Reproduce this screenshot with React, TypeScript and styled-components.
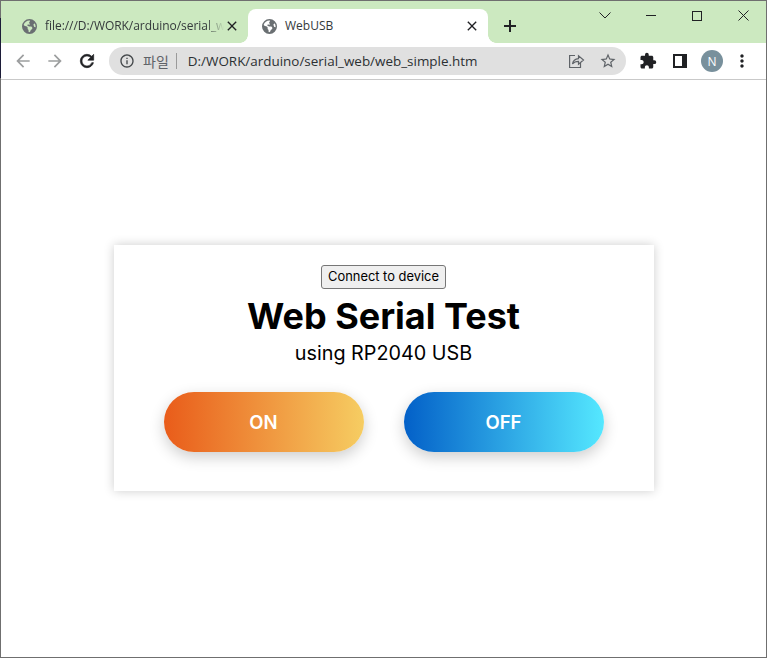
import React from 'react';
import styled, { createGlobalStyle } from 'styled-components';
import { FaEarthAmericas } from 'react-icons/fa6';
import {
  MdArrowBack,
  MdArrowForward,
  MdClose,
  MdExtension,
  MdInfoOutline,
  MdMoreVert,
  MdRefresh,
  MdStarBorder,
} from 'react-icons/md';

const GlobalStyle = createGlobalStyle`
  html, body {
    margin: 0;
    padding: 0;
    height: 100%;
    background: #fff;
  }
  #root {
    height: 100%;
  }
  * {
    box-sizing: border-box;
  }
`;

const Window = styled.div`
  position: relative;
  display: flex;
  flex-direction: column;
  width: 767px;
  height: 658px;
  border: 1px solid #6f6f6f;
  overflow: hidden;
  font-family: 'Open Sans', 'Noto Sans', sans-serif;
`;

/* bit of the dark desktop showing through at the window's left edge */
const EdgeShade = styled.div`
  position: fixed;
  left: 0;
  top: 18px;
  width: 1px;
  height: 60px;
  background: #1c1c38;
`;

const TitleBar = styled.header`
  display: flex;
  align-items: flex-end;
  flex: none;
  height: 42px;
  padding-left: 7px;
  background: #cce9c0;
`;

const Tab = styled.div<{ $active?: boolean }>`
  position: relative;
  display: flex;
  align-items: center;
  width: 240px;
  height: 34px;
  padding: 0 8px 0 14px;
  border-radius: 8px 8px 0 0;
  background: ${(p) => (p.$active ? '#fff' : 'transparent')};

  ${(p) =>
    p.$active &&
    `
    &::before, &::after {
      content: '';
      position: absolute;
      bottom: 0;
      width: 8px;
      height: 8px;
    }
    &::before {
      left: -8px;
      background: radial-gradient(circle at 0 0, transparent 7.5px, #fff 8px);
    }
    &::after {
      right: -8px;
      background: radial-gradient(circle at 100% 0, transparent 7.5px, #fff 8px);
    }
  `}
`;

const TabGlobe = styled(FaEarthAmericas)`
  flex: none;
  width: 15px;
  height: 15px;
  color: #6a6f72;
`;

const TabTitle = styled.span<{ $fade?: boolean }>`
  flex: 1;
  min-width: 0;
  margin-left: 8px;
  white-space: nowrap;
  font-size: 12px;
  line-height: 16px;
  color: #34393b;
  ${(p) =>
    p.$fade &&
    `
    letter-spacing: -0.05px;
    mask-image: linear-gradient(to right, #000 90%, transparent 100%);
  `}
`;

const TabClose = styled(MdClose)`
  flex: none;
  width: 16px;
  height: 16px;
  color: #202124;
`;

const NewTab = styled.svg`
  flex: none;
  width: 12px;
  height: 12px;
  margin: 0 0 11px 16px;
  color: #202124;
`;

const WindowControls = styled.div`
  display: flex;
  align-self: flex-start;
  margin-left: auto;
`;

const WindowControl = styled.div`
  display: flex;
  align-items: center;
  justify-content: center;
  width: 46px;
  height: 29px;
`;

const Toolbar = styled.nav`
  display: flex;
  align-items: center;
  flex: none;
  height: 37px;
  padding: 0 11px 0 12px;
  background: #fff;
  border-bottom: 1px solid #c9c9c9;
`;

const NavIcon = styled.span<{ $dim?: boolean; $gap?: number; $lead?: number; $heavy?: boolean }>`
  display: flex;
  align-items: center;
  justify-content: center;
  width: 20px;
  height: 20px;
  margin-left: ${(p) => p.$lead ?? 0}px;
  margin-right: ${(p) => p.$gap ?? 12}px;
  color: ${(p) => (p.$dim ? '#9c9e9f' : '#202124')};

  svg {
    width: 100%;
    height: 100%;
  }

  ${(p) => p.$heavy && `svg path:not([fill='none']) { stroke: currentColor; stroke-width: 0.8; }`}
`;

const PuzzleIcon = styled(MdExtension)`
  && {
    width: 18px;
    height: 18px;
  }
`;

const Omnibox = styled.div`
  display: flex;
  align-items: center;
  width: 517px;
  height: 28px;
  padding: 0 9px 0 10px;
  border-radius: 14px;
  background: #e0e0e0;
`;

const SiteInfo = styled(MdInfoOutline)`
  flex: none;
  width: 16px;
  height: 16px;
  color: #44484b;
`;

const Scheme = styled.span`
  margin-left: 8px;
  padding-right: 7px;
  border-right: 1px solid #9a9a9a;
  font-family: 'Noto Sans CJK KR', sans-serif;
  font-size: 14px;
  line-height: 16px;
  color: #5f6368;
`;

const Url = styled.span`
  flex: 1;
  margin-left: 11px;
  font-size: 13.45px;
  color: #2c3033;
  white-space: nowrap;
`;

const OmniAction = styled.span<{ $gap?: number }>`
  display: flex;
  width: 18px;
  height: 18px;
  margin-left: ${(p) => p.$gap ?? 0}px;
  color: #5f6368;

  svg {
    width: 100%;
    height: 100%;
  }
`;

const Avatar = styled.span`
  display: flex;
  align-items: center;
  justify-content: center;
  flex: none;
  width: 22px;
  height: 22px;
  margin-left: 1px;
  margin-right: 9px;
  border-radius: 50%;
  background: #78909c;
  font-size: 12px;
  color: #fff;
`;

const Page = styled.main`
  display: flex;
  flex: 1;
  align-items: center;
  justify-content: center;
  padding-bottom: 1px;
  background: #fff;
`;

const Card = styled.section`
  display: flex;
  flex-direction: column;
  align-items: center;
  width: 540px;
  height: 246px;
  padding-top: 20px;
  background: #fff;
  box-shadow: 0 0 10px rgba(0, 0, 0, 0.2);
  font-family: Inter, 'Open Sans', sans-serif;
  color: #000;
`;

const ConnectButton = styled.button`
  height: 24px;
  padding: 0 6px;
  border: 1px solid #767676;
  border-radius: 3px;
  background: #efefef;
  font-family: inherit;
  font-size: 12.9px;
  line-height: 20px;
  color: #000;
`;

const Title = styled.h1`
  margin: 5px 0 0;
  font-size: 36px;
  font-weight: 700;
  line-height: 44px;
`;

const Subtitle = styled.h2`
  margin: 0;
  font-size: 19.8px;
  font-weight: 400;
  line-height: 30px;
`;

const ButtonRow = styled.div`
  display: flex;
  gap: 40px;
  margin-top: 24px;
`;

const GradientButton = styled.button<{ $from: string; $to: string }>`
  width: 200px;
  height: 60px;
  border: none;
  border-radius: 30px;
  background: linear-gradient(to right, ${(p) => p.$from}, ${(p) => p.$to});
  box-shadow: 0 5px 15px rgba(0, 0, 0, 0.2);
  font-family: inherit;
  font-size: 18.5px;
  font-weight: 600;
  color: #fff;
`;

export default function App() {
  return (
    <>
      <GlobalStyle />
      <Window>
        <TitleBar>
          <Tab>
            <TabGlobe />
            <TabTitle $fade>file:///D:/WORK/arduino/serial_w</TabTitle>
            <TabClose />
          </Tab>
          <Tab $active>
            <TabGlobe />
            <TabTitle>WebUSB</TabTitle>
            <TabClose />
          </Tab>
          <NewTab viewBox="0 0 12 12" fill="currentColor">
            <path d="M5 0H7V5H12V7H7V12H5V7H0V5H5Z" />
          </NewTab>
          <WindowControls>
            <WindowControl>
              <svg width="12" height="7" viewBox="0 0 12 7" fill="none" stroke="#202124">
                <path d="M0.5 0.5 L6 6 L11.5 0.5" />
              </svg>
            </WindowControl>
            <WindowControl>
              <svg width="10" height="1" viewBox="0 0 10 1" fill="#202124">
                <rect width="10" height="1" />
              </svg>
            </WindowControl>
            <WindowControl>
              <svg width="10" height="10" viewBox="0 0 10 10" fill="none" stroke="#202124">
                <rect x="0.5" y="0.5" width="9" height="9" />
              </svg>
            </WindowControl>
            <WindowControl>
              <svg width="11" height="11" viewBox="0 0 11 11" fill="none" stroke="#202124">
                <path d="M0.5 0.5 L10.5 10.5 M10.5 0.5 L0.5 10.5" />
              </svg>
            </WindowControl>
          </WindowControls>
        </TitleBar>
        <Toolbar>
          <NavIcon $dim>
            <MdArrowBack />
          </NavIcon>
          <NavIcon $dim>
            <MdArrowForward />
          </NavIcon>
          <NavIcon $heavy>
            <MdRefresh />
          </NavIcon>
          <Omnibox>
            <SiteInfo />
            <Scheme>파일</Scheme>
            <Url>D:/WORK/arduino/serial_web/web_simple.htm</Url>
            <OmniAction>
              <svg viewBox="0 0 18 18" fill="none" stroke="currentColor" strokeWidth="1.2">
                <path d="M8 3.5H2.6V15.5H13.5V11" />
                <path d="M5.5 12C6 8.5 8.5 6.8 11.5 6.6V3.8L16.5 8L11.5 12.2V9.3C9 9.3 7 10 5.5 12Z" />
              </svg>
            </OmniAction>
            <OmniAction $gap={14}>
              <MdStarBorder />
            </OmniAction>
          </Omnibox>
          <NavIcon $lead={12}>
            <PuzzleIcon />
          </NavIcon>
          <NavIcon $gap={10}>
            <svg viewBox="0 0 20 20">
              <path
                fillRule="evenodd"
                fill="currentColor"
                d="M3 3H17V17H3ZM5 5V15H12V5Z"
              />
            </svg>
          </NavIcon>
          <Avatar>N</Avatar>
          <NavIcon $gap={0}>
            <MdMoreVert />
          </NavIcon>
        </Toolbar>
        <Page>
          <Card>
            <ConnectButton>Connect to device</ConnectButton>
            <Title>Web Serial Test</Title>
            <Subtitle>using RP2040 USB</Subtitle>
            <ButtonRow>
              <GradientButton $from="#e95c1a" $to="#f6cd62">ON</GradientButton>
              <GradientButton $from="#0360c8" $to="#55e8ff">OFF</GradientButton>
            </ButtonRow>
          </Card>
        </Page>
        <EdgeShade />
      </Window>
    </>
  );
}
